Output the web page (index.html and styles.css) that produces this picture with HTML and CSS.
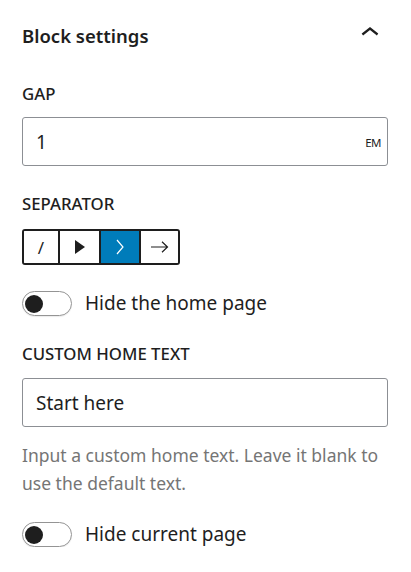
FILE: index.html
```html
<!DOCTYPE html>
<html lang="en">
<head>
<meta charset="utf-8">
<title>Block settings</title>
<link rel="stylesheet" href="styles.css">
</head>
<body>
<div class="panel">
  <div class="panel-header">
    <h2 class="panel-title">Block settings</h2>
    <svg class="chevron" viewBox="0 0 24 24" aria-hidden="true"><path d="M6.5 12.4L12 8l5.5 4.4-.9 1.2L12 10l-4.6 3.6-1-1.2z"/></svg>
  </div>

  <div class="field field-gap">
    <label class="field-label">Gap</label>
    <div class="unit-input">
      <span class="unit-value">1</span>
      <span class="unit-suffix">em</span>
    </div>
  </div>

  <div class="field field-separator">
    <span class="field-label">Separator</span>
    <div class="btn-group">
      <button class="seg seg-1"><span class="slash">/</span></button>
      <button class="seg seg-2"><svg class="tri" viewBox="0 0 10 14"><path d="M0 0 L10 7 L0 14 Z"/></svg></button>
      <button class="seg seg-3 is-active"><svg class="gt" viewBox="0 0 8 16"><path d="M1 1 L7 8 L1 15"/></svg></button>
      <button class="seg seg-4"><svg class="arrow" viewBox="0 0 18 12"><path d="M0 6 H16.5 M11 0.8 L16.5 6 L11 11.2"/></svg></button>
    </div>
  </div>

  <div class="toggle-row toggle-home">
    <span class="toggle"><span class="knob"></span></span>
    <span class="toggle-label">Hide the home page</span>
  </div>

  <div class="field field-home-text">
    <label class="field-label">Custom home text</label>
    <div class="text-input">Start here</div>
    <p class="help">Input a custom home text. Leave it blank to use the default text.</p>
  </div>

  <div class="toggle-row toggle-current">
    <span class="toggle"><span class="knob"></span></span>
    <span class="toggle-label">Hide current page</span>
  </div>
</div>
</body>
</html>
```

FILE: styles.css
```css
* { box-sizing: border-box; }
html, body { margin: 0; padding: 0; background: #fff; }
body {
  font-family: "Noto Sans", "Open Sans", sans-serif;
  color: #1e1e1e;
}
.panel { padding: 19px 23px 0 22px; }

.panel-header {
  display: flex;
  align-items: center;
  justify-content: space-between;
  height: 34px;
}
.panel-title {
  margin: 0;
  font-size: 18.5px;
  font-weight: 600;
  line-height: 26px;
}
.chevron {
  width: 36px;
  height: 36px;
  fill: #1e1e1e;
  margin-top: -6px;
  margin-right: 0;
}

.field-label {
  display: block;
  font-size: 16.8px;
  font-weight: 500;
  text-transform: uppercase;
  line-height: 20px;
}
.field-gap { margin-top: 31px; }
.field-gap .field-label { margin-bottom: 13px; }

.unit-input {
  display: flex;
  align-items: center;
  justify-content: space-between;
  height: 49px;
  border: 1px solid #8c8f94;
  border-radius: 3px;
  padding: 0 6px 0 13px;
}
.unit-value { font-size: 19px; color: #1e1e1e; }
.unit-suffix {
  font-size: 11.5px;
  text-transform: uppercase;
  letter-spacing: -0.5px;
  color: #1e1e1e;
  padding-top: 2px;
}

.field-separator { margin-top: 28px; }
.field-separator .field-label { margin-bottom: 15px; }
.btn-group {
  display: inline-flex;
  height: 36px;
  border: 2px solid #1e1e1e;
  border-radius: 3px;
  overflow: hidden;
}
.seg {
  display: flex;
  align-items: center;
  justify-content: center;
  height: 100%;
  padding: 0;
  margin: 0;
  border: 0;
  border-left: 2px solid #1e1e1e;
  background: #fff;
  color: #1e1e1e;
  font-family: inherit;
}
.seg-1 { width: 34px; border-left: 0; }
.seg-2 { width: 41px; }
.seg-3 { width: 40px; }
.seg-4 { width: 39px; }
.seg.is-active { background: #007cba; }
.slash { font-size: 17px; line-height: 1; }
.tri { width: 10px; height: 14px; fill: #1e1e1e; }
.gt { width: 8px; height: 16px; fill: none; stroke: #fff; stroke-width: 1.2; }
.arrow { width: 18px; height: 12px; fill: none; stroke: #1e1e1e; stroke-width: 1.2; }

.toggle-row {
  display: flex;
  align-items: center;
  gap: 13px;
}
.toggle-home { margin-top: 26px; }
.toggle {
  display: flex;
  align-items: center;
  width: 50px;
  height: 25px;
  border: 1px solid #949494;
  border-radius: 13px;
  padding-left: 2px;
  box-shadow: 0 1px 1px rgba(0,0,0,0.08);
}
.knob {
  width: 18px;
  height: 18px;
  border-radius: 50%;
  background: #1e1e1e;
}
.toggle-label { font-size: 19px; line-height: 25px; }

.field-home-text { margin-top: 28px; }
.field-home-text .field-label { margin-bottom: 14px; }
.text-input {
  display: flex;
  align-items: center;
  height: 49px;
  border: 1px solid #8c8f94;
  border-radius: 3px;
  padding: 0 13px;
  font-size: 19px;
}
.help {
  margin: 14px 0 0;
  font-size: 17.5px;
  line-height: 28px;
  color: #757575;
}
.toggle-current { margin-top: 25px; }
```
